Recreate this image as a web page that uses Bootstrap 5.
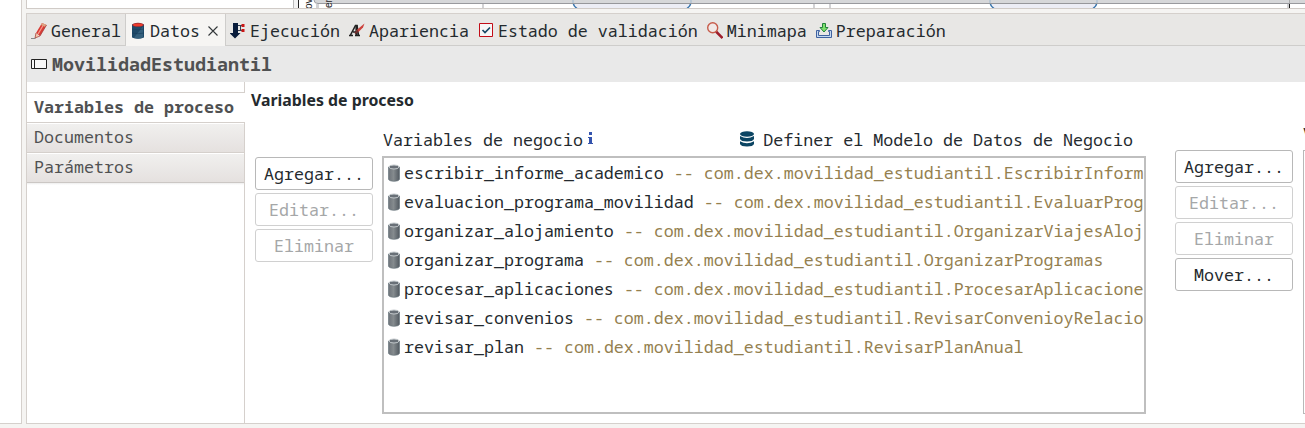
<!DOCTYPE html>
<html lang="es">
<head>
<meta charset="utf-8">
<title>MovilidadEstudiantil</title>
<link href="https://cdn.jsdelivr.net/npm/bootstrap@5.3.0/dist/css/bootstrap.min.css" rel="stylesheet">
<style>
body{font-family:"Noto Sans Mono","Noto Mono","DejaVu Sans Mono",monospace;font-size:16.667px;line-height:24px;color:#242a2e;background:#f5f4f2;height:428px}
svg{display:block;flex:none}
.outline-pane{width:22px;height:424px;border:solid #d5d0cc;border-width:0 1px 1px 0}
.work-area{margin-left:4px}
.canvas-strip{height:9px;border:solid #d0cbc7;border-width:0 0 1px 1px}
.props{margin-top:4px;height:411px;border:solid #d5d0cc;border-width:1px 0 1px 1px}
.tab-strip{height:32px;background:#e8e7e5;border-bottom:1px solid #cecdcb}
.tab-strip .nav-link{color:#242a2e;padding:2px 0 0;height:32px;gap:4px;margin-right:9px}
.tab-strip .first-tab{margin:0;padding-left:4px;width:98px}
.tab-strip .nav-link.active{background:#f6f5f3;border:solid #cecdcb;border-width:0 1px;margin-right:4px;padding-left:4px;width:101px}
.title-strip{height:36px;background:#e9e9e9;color:#505152;font-size:18.333px;font-weight:700;padding-left:4px;gap:5px}
.side{width:218px;padding-top:10px;border-right:1px solid #d5d0cc}
.side .list-group-item{height:30px;padding:2px 7px;border:0;border-top:1px solid #d5d0cc;color:#505152;box-shadow:inset 0 1px #fff;background:linear-gradient(#f1f0ef,#e5e1df);line-height:24px}
.side .list-group-item.active{height:30px;background:#fff;color:#505152;font-weight:700;margin:0 -1px 0 0;border-color:#d5d0cc}
.side-end{height:3px;border-top:1px solid #cbc7c4;background:linear-gradient(#eee,#fff)}
.sect{font:700 15.85px/24px "Noto Sans",sans-serif;padding:6px 0 1px 6px}
.btns{width:118px;gap:3px}
.btns .btn{font:inherit;height:33px;padding:1px 0 0;border:1px solid #b8b8b8;border-radius:3px;background:#fff;color:#242a2e}
.btns .btn:disabled{color:#a5a7a8;border-color:#d0d0d0;opacity:1}
.left-btns{margin:44px 0 0 10px}
.right-btns{margin:37px 0 0 29px}
.vars{width:764px;margin-left:9px;padding-top:15px}
.vars-head{height:28px;padding:0 13px 0 1px}
.var-box{height:258px;border:2px solid #bfbfbf;padding:0 0 0 4px}
.var-row{height:29px;gap:4px}
.kind{color:#94804f}
.next-vars{width:30px;margin:9px 0 0 10px}
.next-label{height:28px}
.next-box{height:264px;border:1px solid #b8b8b8;border-right:0}
</style>
</head>
<body class="d-flex overflow-hidden">
<svg width="0" height="0" class="position-absolute"><defs>
<linearGradient id="g"><stop stop-color="#6d7379"/><stop offset=".45" stop-color="#858b8e"/><stop offset="1" stop-color="#515960"/></linearGradient>
<symbol id="cyl" viewBox="0 0 12 18"><path d="M.5 3v12c0 3 11 3 11 0V3z" fill="url(#g)" stroke="#69757d" stroke-width=".7"/><ellipse cx="6" cy="3" rx="5" ry="2" fill="#697077" stroke="#c3c9cc"/></symbol>
</defs></svg>
<aside class="outline-pane bg-white flex-shrink-0"></aside>
<main class="work-area flex-grow-1 overflow-hidden">
  <div class="canvas-strip bg-white">
    <svg width="1278" height="8"><path d="M266.500 0V8" stroke="#bbb"/><path d="M267 0h5v8h-5z" fill="#f3f3f3"/><path d="M271.500 0v8" stroke="#222"/>
      <path d="M289 4h3v4h-3zM455 4h2v4h-2zM786 4h2v4h-2zM802 4h2v4h-2zM1260 4h2v4h-2z" fill="#d2d2d4"/>
      <path d="M287 0h991v3H290q-3-1-3-3" fill="#d6d7d9"/><path d="M287 0q0 3.500 4 3.500H1278" fill="none" stroke="#999a9e"/>
      <g fill="#ecedf5" stroke="#3975ad" stroke-width="1.300"><path d="M546 3q1 4 5 6h108q4-2 5-6M963 3q1 4 5 6h97q4-2 5-6"/></g>
      <path d="M546 0h118v3H546zM963 0h107v3H963z" fill="#d6d7d9"/>
      <path d="M545 3.500h120M962 3.500h109" stroke="#96979b"/><path d="M546 0v3M664 0v3M963 0v3M1070 0v3" stroke="#9fb9cf"/>
      <path d="M1262.500 4v4" stroke="#222"/><path d="M1262.500 0v3" stroke="#aaa"/>
      <g font-family="Liberation Sans" font-size="10" fill="#222"><text transform="translate(285 9) rotate(-90)">ov</text><text transform="translate(305 8) rotate(-90)">er</text></g></svg>
  </div>
  <section class="props bg-white">
    <nav class="nav tab-strip flex-nowrap text-nowrap">
      <a class="nav-link first-tab d-flex align-items-center"><svg width="16" height="18"><path d="M0 16.500h4.500" stroke="#888"/><path d="m4.500 11 3.500 3-4 2.500z" fill="#f1c7a6"/><path d="M5 11 11 1l4.500 2L9 14z" fill="#d83b35"/><path d="m7 12 6-10" stroke="#f79b8b" stroke-width="1.300"/><path d="m11 1 4.500 2-1 2-4.500-2z" fill="#dca583"/><path d="m5 11-1 5 5-2 6.500-11" fill="none" stroke="#9c3535" stroke-width=".7"/></svg>General</a>
      <a class="nav-link active d-flex align-items-center"><svg width="16" height="18"><path d="M2 2.500v13q6 2.500 12 0v-13z" fill="#1e4968"/><path d="m4 15.500 9-11v11q-5 2-9 0" fill="#335f7c"/><path d="M2 7q6 1.500 12 0M2 11q6 1.500 12 0" fill="none" stroke="#163c5b" stroke-width=".6"/><ellipse cx="8" cy="2.800" rx="6" ry="2" fill="#8d2d37"/><ellipse cx="8" cy="2.900" rx="4.900" ry="1.400" fill="#ed3c2c"/></svg>Datos<svg width="10" height="10" class="ms-1"><path d="m.5.500 9 9m0-9-9 9" stroke="#33373a" stroke-width="1.100"/></svg></a>
      <a class="nav-link d-flex align-items-center"><svg width="16" height="18"><path d="M3 1h5v10h2.500L5 16.500l-5.500-5.500H3z" fill="#081c3b"/><path d="M8 3.500h5M8 8.500h5M10.500 3v6" stroke="#314052"/><path d="M11.500 2h3v3h-3zM11.500 7h3v3h-3z" fill="#ca1717"/></svg>Ejecución</a>
      <a class="nav-link d-flex align-items-center"><svg width="16" height="18"><path d="M0 13.500h4M6 13.500h5M1.500 13l5-9.500h1.500l1.500 10M4 10h4" fill="none" stroke="#222" stroke-width="1.600"/><path d="M7.500 3v10" stroke="#222" stroke-width="2.200"/><path d="m15.500 1.500-1.500 4-5 5-2-2z" fill="#cc423d"/><path d="m9 8.500-3 3" stroke="#702f2f" stroke-width="2"/></svg>Apariencia</a>
      <a class="nav-link d-flex align-items-center"><svg width="16" height="16"><path d="M1.500 .500h13v13h-13z" fill="#f7f7f7" stroke="#c20d18"/><path d="m4.500 7 2.500 2.500 5-5" fill="none" stroke="#174966" stroke-width="1.700"/></svg>Estado de validación</a>
      <a class="nav-link d-flex align-items-center"><svg width="16" height="18"><path d="m9 9.500 6.500 6.500" stroke="#9f1e2c" stroke-width="2.500"/><circle cx="5.700" cy="5.700" r="5" fill="#f1e9e7" stroke="#c75c4b" stroke-width="1.400"/></svg>Minimapa</a>
      <a class="nav-link d-flex align-items-center"><svg width="16" height="18"><path d="M.5 8.500h3v1h-1v4h11v-4h-1v-1h3v7H.5z" fill="#c3d8f1" stroke="#3f62a0"/><path d="M6.500 1.500h3v4H12L8 10 4 5.500h2.500z" fill="#7ee06d" stroke="#23833b"/></svg>Preparación</a>
    </nav>
    <div class="title-strip d-flex align-items-center"><svg width="16" height="12"><path d="M.5 1.500h15v9H.5zM3.500 1v10" fill="#f8f8f8" stroke="#222"/></svg>MovilidadEstudiantil</div>
    <div class="d-flex" style="height:341px">
      <aside class="side flex-shrink-0"><div class="list-group list-group-flush text-nowrap"><a class="list-group-item active">Variables de proceso</a><a class="list-group-item">Documentos</a><a class="list-group-item">Parámetros</a></div><div class="side-end"></div></aside>
      <div class="flex-grow-1">
        <div class="sect">Variables de proceso</div>
        <div class="d-flex align-items-start">
          <div class="btns left-btns d-flex flex-column flex-shrink-0"><button class="btn">Agregar...</button><button class="btn" disabled>Editar...</button><button class="btn" disabled>Eliminar</button></div>
          <div class="vars flex-shrink-0">
            <div class="vars-head d-flex text-nowrap"><span>Variables de negocio</span><svg width="7" height="14" class="ms-1 mt-1"><path d="M2 0h3v3H2zM1 5h4v6h1v1H1v-1h1V6H1z" fill="#3453ad"/></svg>
              <span class="d-flex ms-auto"><svg width="16" height="18" viewBox="0 0 16 18" class="mt-1 me-2" style="margin-top:3px!important"><g fill="#0c4563"><ellipse cx="8" cy="3" rx="7" ry="2.800"/><path d="M1 5q7 4 14 0v3q-1 2.500-7 2.500T1 8zM1 10.300q7 4 14 0v2.700q-1 2.500-7 2.500T1 13z"/></g></svg>Definer el Modelo de Datos de Negocio</span></div>
            <div class="var-box overflow-hidden text-nowrap">
              <div class="var-row d-flex align-items-center"><svg width="12" height="18"><use href="#cyl"/></svg><span>escribir_informe_academico <span class="kind">-- com.dex.movilidad_estudiantil.EscribirInform</span></span></div>
              <div class="var-row d-flex align-items-center"><svg width="12" height="18"><use href="#cyl"/></svg><span>evaluacion_programa_movilidad <span class="kind">-- com.dex.movilidad_estudiantil.EvaluarProg</span></span></div>
              <div class="var-row d-flex align-items-center"><svg width="12" height="18"><use href="#cyl"/></svg><span>organizar_alojamiento <span class="kind">-- com.dex.movilidad_estudiantil.OrganizarViajesAloj</span></span></div>
              <div class="var-row d-flex align-items-center"><svg width="12" height="18"><use href="#cyl"/></svg><span>organizar_programa <span class="kind">-- com.dex.movilidad_estudiantil.OrganizarProgramas</span></span></div>
              <div class="var-row d-flex align-items-center"><svg width="12" height="18"><use href="#cyl"/></svg><span>procesar_aplicaciones <span class="kind">-- com.dex.movilidad_estudiantil.ProcesarAplicacione</span></span></div>
              <div class="var-row d-flex align-items-center"><svg width="12" height="18"><use href="#cyl"/></svg><span>revisar_convenios <span class="kind">-- com.dex.movilidad_estudiantil.RevisarConvenioyRelacio</span></span></div>
              <div class="var-row d-flex align-items-center"><svg width="12" height="18"><use href="#cyl"/></svg><span>revisar_plan <span class="kind">-- com.dex.movilidad_estudiantil.RevisarPlanAnual</span></span></div>
            </div>
          </div>
          <div class="btns right-btns d-flex flex-column flex-shrink-0"><button class="btn">Agregar...</button><button class="btn" disabled>Editar...</button><button class="btn" disabled>Eliminar</button><button class="btn">Mover...</button></div>
          <div class="next-vars flex-shrink-0"><div class="next-label">V</div><div class="next-box"></div></div>
        </div>
      </div>
    </div>
  </section>
</main>
<script src="https://cdn.jsdelivr.net/npm/bootstrap@5.3.0/dist/js/bootstrap.bundle.min.js"></script>
</body>
</html>
